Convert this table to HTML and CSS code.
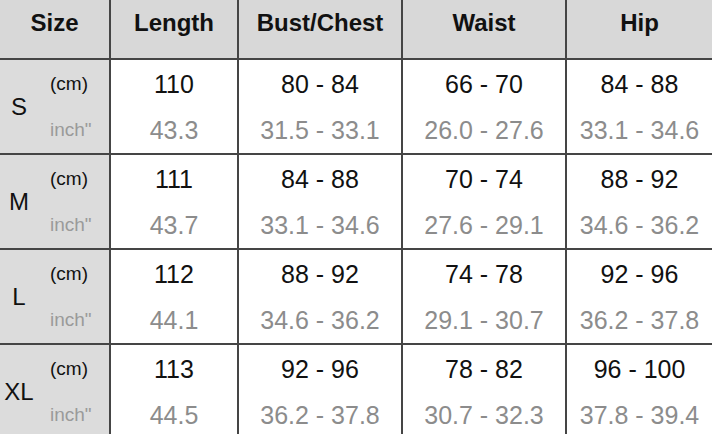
FILE: index.html
```html
<!DOCTYPE html>
<html>
<head>
<meta charset="utf-8">
<link rel="stylesheet" href="styles.css">
</head>
<body>
<div class="chart">
  <div class="hd">Size</div>
  <div class="hd">Length</div>
  <div class="hd">Bust/Chest</div>
  <div class="hd">Waist</div>
  <div class="hd">Hip</div>

  <div class="size"><span class="letter">S</span><span class="units"><span class="cm">(cm)</span><span class="in">inch"</span></span></div>
  <div class="cell"><span class="cm">110</span><span class="in">43.3</span></div>
  <div class="cell"><span class="cm">80 - 84</span><span class="in">31.5 - 33.1</span></div>
  <div class="cell"><span class="cm">66 - 70</span><span class="in">26.0 - 27.6</span></div>
  <div class="cell"><span class="cm">84 - 88</span><span class="in">33.1 - 34.6</span></div>

  <div class="size"><span class="letter">M</span><span class="units"><span class="cm">(cm)</span><span class="in">inch"</span></span></div>
  <div class="cell"><span class="cm">111</span><span class="in">43.7</span></div>
  <div class="cell"><span class="cm">84 - 88</span><span class="in">33.1 - 34.6</span></div>
  <div class="cell"><span class="cm">70 - 74</span><span class="in">27.6 - 29.1</span></div>
  <div class="cell"><span class="cm">88 - 92</span><span class="in">34.6 - 36.2</span></div>

  <div class="size"><span class="letter">L</span><span class="units"><span class="cm">(cm)</span><span class="in">inch"</span></span></div>
  <div class="cell"><span class="cm">112</span><span class="in">44.1</span></div>
  <div class="cell"><span class="cm">88 - 92</span><span class="in">34.6 - 36.2</span></div>
  <div class="cell"><span class="cm">74 - 78</span><span class="in">29.1 - 30.7</span></div>
  <div class="cell"><span class="cm">92 - 96</span><span class="in">36.2 - 37.8</span></div>

  <div class="size"><span class="letter">XL</span><span class="units"><span class="cm">(cm)</span><span class="in">inch"</span></span></div>
  <div class="cell"><span class="cm">113</span><span class="in">44.5</span></div>
  <div class="cell"><span class="cm">92 - 96</span><span class="in">36.2 - 37.8</span></div>
  <div class="cell"><span class="cm">78 - 82</span><span class="in">30.7 - 32.3</span></div>
  <div class="cell"><span class="cm">96 - 100</span><span class="in">37.8 - 39.4</span></div>
</div>
</body>
</html>
```
FILE: styles.css
```css
html, body {
  margin: 0;
  padding: 0;
  background: #ffffff;
}
body {
  font-family: "Liberation Sans", Arial, sans-serif;
  width: 712px;
  height: 434px;
  overflow: hidden;
}
.chart {
  display: grid;
  grid-template-columns: 109px 126px 162px 162px 1fr;
  grid-template-rows: 58px 93px 93px 93px 93px;
  gap: 2px;
  background: #454545;
  width: 712px;
}
.hd {
  background: #d8d8d8;
  color: #111111;
  font-weight: bold;
  font-size: 24px;
  line-height: 45px;
  text-align: center;
}
.cell {
  background: #ffffff;
  display: flex;
  flex-direction: column;
  align-items: center;
  padding-top: 1px;
}
.cell .cm,
.cell .in {
  font-size: 25px;
  line-height: 46px;
}
.cm {
  color: #111111;
}
.in {
  color: #8c8c8c;
}
.size {
  background: #dcdcdc;
  display: flex;
  align-items: center;
}
.letter {
  width: 38px;
  text-align: center;
  font-size: 24px;
  color: #111111;
}
.units {
  display: flex;
  flex-direction: column;
  padding-left: 12px;
  padding-top: 1px;
  align-self: flex-start;
}
.units .cm,
.units .in {
  font-size: 19px;
  line-height: 46px;
}
.units .in {
  color: #9a9a9a;
}
```
